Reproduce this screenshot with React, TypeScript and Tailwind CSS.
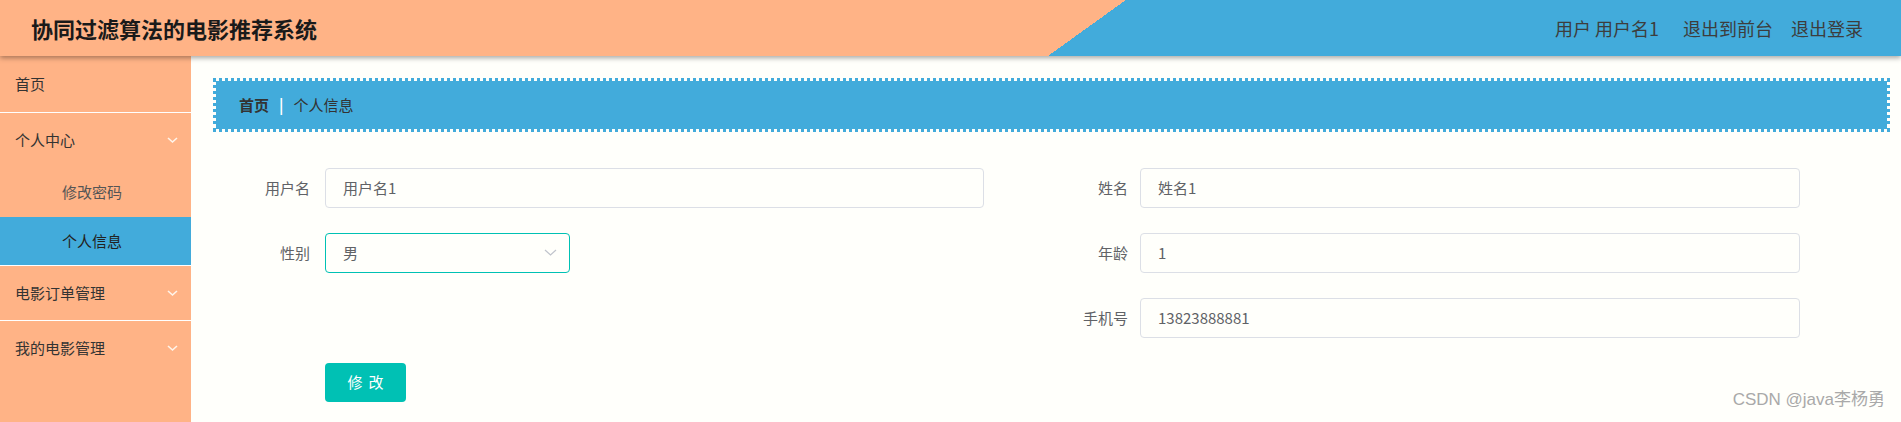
const font = "font-['Noto_Sans_CJK_SC','Noto_Sans',sans-serif]"

interface FieldProps {
    label: string
    value: string
    labelWidth: string
    inputWidth: string
    gap: string
}

const Field = ({ label, value, labelWidth, inputWidth, gap }: FieldProps) => {
    return (
        <div className="flex items-center h-[40px]">
            <label className={`${labelWidth} ${gap} text-right text-[15px] text-[#606266]`}>{ label }</label>
            <div className={`${inputWidth} h-[40px] flex items-center px-[17px] border border-[#dcdfe6] rounded-[4px] bg-[#fffffb] text-[15px] text-[#606266]`}>
                { value }
            </div>
        </div>
    )
}

const Arrow = ({ w, h, color, stroke }: { w: number, h: number, color: string, stroke: number }) => (
    <svg width={w} height={h + 2} viewBox={`0 0 ${w} ${h + 2}`} fill="none">
        <polyline points={`1,1 ${w / 2},${h} ${w - 1},1`} stroke={color} strokeWidth={stroke} />
    </svg>
)

const SideItem = ({ title, arrow, className = "" }: { title: string, arrow?: boolean, className?: string }) => {
    return (
        <div className={`flex items-center justify-between pl-[15px] pr-[13px] text-[15px] text-[#333] ${className}`}>
            <span>{ title }</span>
            { arrow && <Arrow w={11} h={5} color="#fff4ea" stroke={1.6} /> }
        </div>
    )
}

const App = () => {
    return (
        <div className={`relative w-[1901px] h-[422px] flex flex-col overflow-hidden bg-[#fffffb] ${font}`}>
            {/* header */}
            <header className="relative z-10 h-[56px] shrink-0 flex items-center justify-between bg-[linear-gradient(144.3deg,#ffb386_657px,#42abdb_657px)] shadow-[0_2px_5px_rgba(0,0,0,0.35)]">
                <h1 className="pl-[31px] text-[22px] font-bold text-[#1a1a1a]">协同过滤算法的电影推荐系统</h1>
                <nav className="flex items-center pr-[38px] text-[18px] text-[#3d3d3d]">
                    <span>用户 用户名1</span>
                    <span className="ml-[24px]">退出到前台</span>
                    <span className="ml-[18px]">退出登录</span>
                </nav>
            </header>

            <div className="flex flex-1 min-h-0">
                {/* sidebar */}
                <aside className="w-[191px] shrink-0 bg-[#ffb386] flex flex-col">
                    <SideItem title="首页" className="h-[57px] border-b border-white" />
                    <SideItem title="个人中心" arrow className="h-[54px]" />
                    <div className="h-[50px] flex items-center pl-[62px] text-[15px] text-[#555]">修改密码</div>
                    <div className="h-[49px] flex items-center pl-[62px] text-[15px] text-[#222] bg-[#42abdb] border-b border-white">个人信息</div>
                    <SideItem title="电影订单管理" arrow className="h-[55px] border-b border-white" />
                    <SideItem title="我的电影管理" arrow className="h-[55px]" />
                </aside>

                {/* main */}
                <main className="flex-1 pl-[22px] pr-[11px] pt-[22px]">
                    <div className="h-[54px] flex items-center pl-[23px] bg-[#42abdb] bg-clip-padding border-[3px] border-dotted border-[#42abdb] text-[15px]">
                        <span className="font-bold text-[#333]">首页</span>
                        <span className="mx-[10px] font-bold text-white">|</span>
                        <span className="text-[#333]">个人信息</span>
                    </div>

                    <div className="mt-[36px] grid grid-cols-[771px_772px] gap-x-[44px] gap-y-[25px]">
                        <Field label="用户名" value="用户名1" labelWidth="w-[97px]" gap="mr-[15px]" inputWidth="w-[659px]" />
                        <Field label="姓名" value="姓名1" labelWidth="w-[100px]" gap="mr-[12px]" inputWidth="w-[660px]" />

                        <div className="flex items-center h-[40px]">
                            <label className="w-[97px] mr-[15px] text-right text-[15px] text-[#606266]">性别</label>
                            <div className="w-[245px] h-[40px] flex items-center justify-between pl-[17px] pr-[12px] border border-[#00c1b4] rounded-[4px] text-[15px] text-[#606266]">
                                <span>男</span>
                                <Arrow w={13} h={6} color="#c0c4cc" stroke={1.2} />
                            </div>
                        </div>
                        <Field label="年龄" value="1" labelWidth="w-[100px]" gap="mr-[12px]" inputWidth="w-[660px]" />

                        <div />
                        <Field label="手机号" value="13823888881" labelWidth="w-[100px]" gap="mr-[12px]" inputWidth="w-[660px]" />

                        <div className="pl-[112px]">
                            <button className="w-[81px] h-[39px] rounded-[4px] bg-[#00c1b4] text-white text-[15px] tracking-[6px] pl-[6px]">修改</button>
                        </div>
                    </div>
                </main>
            </div>

            <div className="absolute right-[16px] bottom-[10px] text-[17px] text-[#a9a9a9] font-['Liberation_Sans','Noto_Sans_CJK_SC',sans-serif]">CSDN @java李杨勇</div>
        </div>
    )
}

export default App
